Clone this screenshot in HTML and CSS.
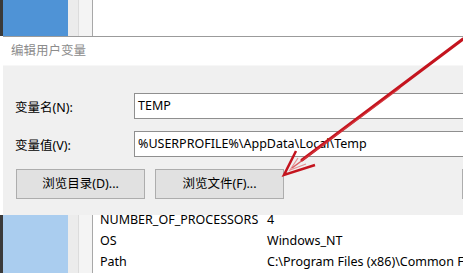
FILE: index.html
```html
<!DOCTYPE html>
<html>
<head>
<meta charset="utf-8">
<link rel="stylesheet" href="styles.css">
</head>
<body>
<div class="screen">
  <div class="bg bg-top">
    <div class="edge"></div>
    <div class="nav nav-sel"></div>
    <div class="stripe s1"></div>
    <div class="stripe s2"></div>
    <div class="content"></div>
  </div>

  <div class="dialog">
    <div class="title">编辑用户变量</div>
    <div class="body">
      <div class="field">
        <label class="lbl">变量名(N):</label>
        <div class="input">TEMP</div>
      </div>
      <div class="field">
        <label class="lbl">变量值(V):</label>
        <div class="input">%USERPROFILE%\AppData\Local\Temp</div>
      </div>
      <div class="buttons">
        <div class="btn">浏览目录(D)...</div>
        <div class="btn">浏览文件(F)...</div>
        <div class="btn btn-cut"></div>
      </div>
    </div>
  </div>

  <div class="bg bg-bottom">
    <div class="edge"></div>
    <div class="nav nav-light"></div>
    <div class="stripe s1"></div>
    <div class="stripe s2"></div>
    <div class="content">
      <div class="rows">
        <div class="row"><span class="c1">NUMBER_OF_PROCESSORS</span><span class="c2">4</span></div>
        <div class="row"><span class="c1">OS</span><span class="c2">Windows_NT</span></div>
        <div class="row"><span class="c1">Path</span><span class="c2">C:\Program Files (x86)\Common F</span></div>
      </div>
    </div>
  </div>

  <svg class="arrow" width="463" height="273" viewBox="0 0 463 273">
    <line x1="463" y1="39" x2="302" y2="160" stroke="#c4141e" stroke-width="3" stroke-linecap="round"/>
    <line x1="400" y1="88" x2="292" y2="168" stroke="#d63a40" stroke-width="1.5" opacity="0.8"/>
    <polyline points="296,151 284,175 315,165" fill="none" stroke="#c4141e" stroke-width="2.5" stroke-linejoin="miter"/>
    <polyline points="298,158 290,170 306,164" fill="none" stroke="#e06a6e" stroke-width="1.2" opacity="0.7"/>
  </svg>
</div>
</body>
</html>
```

FILE: styles.css
```css
html, body {
  margin: 0;
  padding: 0;
}
body {
  width: 463px;
  height: 273px;
  overflow: hidden;
  background: #fff;
  font-family: "Noto Sans", "Noto Sans CJK SC", sans-serif;
  font-size: 12.5px;
  color: #000;
}
.screen {
  position: relative;
  width: 463px;
  height: 273px;
  overflow: hidden;
  display: flex;
  flex-direction: column;
}
.bg {
  display: flex;
  flex: none;
}
.bg-top {
  height: 36px;
}
.bg-bottom {
  flex: 1;
  min-height: 0;
}
.edge {
  width: 3px;
  background: #3a3a3a;
}
.nav {
  width: 65px;
}
.nav-sel {
  background: #4f93d6;
}
.nav-light {
  background: #aacdef;
}
.stripe.s1 {
  width: 10px;
  background: #ececec;
  border-right: 1px solid #dcdcdc;
}
.stripe.s2 {
  width: 13px;
  background: #f4f4f4;
  border-right: 1px solid #a8a8a8;
}
.content {
  flex: 1;
  background: #fff;
  overflow: hidden;
}

.dialog {
  flex: none;
  height: 179px;
  margin-left: 3px;
  border-top: 1px solid #9b9b9b;
  background: #f0f0f0;
  display: flex;
  flex-direction: column;
  box-sizing: border-box;
}
.title {
  height: 28px;
  background: #fff;
  border-bottom: 1px solid #f7f7f7;
  color: #8c8c8c;
  font-size: 12.5px;
  line-height: 28px;
  padding-left: 8px;
}
.body {
  padding: 27px 0 0 12px;
}
.field {
  display: flex;
  align-items: center;
  height: 26px;
  margin-bottom: 12px;
}
.lbl {
  width: 119px;
  flex: none;
}
.input {
  flex: 1;
  height: 26px;
  box-sizing: border-box;
  border: 1px solid #8f8f8f;
  border-right: none;
  background: #fff;
  line-height: 24px;
  padding-left: 3px;
  white-space: nowrap;
  overflow: hidden;
}
.buttons {
  display: flex;
  gap: 10px;
  margin-top: 4px;
  padding-left: 1px;
}
.btn {
  width: 129px;
  height: 30px;
  box-sizing: border-box;
  background: #e1e1e1;
  border: 1px solid #adadad;
  text-align: center;
  line-height: 28px;
  flex: none;
}
.btn-cut {
  margin-left: 168px;
}

.rows {
  margin-top: -6px;
  padding-left: 7px;
}
.row {
  height: 21px;
  line-height: 21px;
  display: flex;
  white-space: nowrap;
}
.c1 {
  width: 167px;
  flex: none;
}
.arrow {
  position: absolute;
  left: 0;
  top: 0;
  pointer-events: none;
}
```
